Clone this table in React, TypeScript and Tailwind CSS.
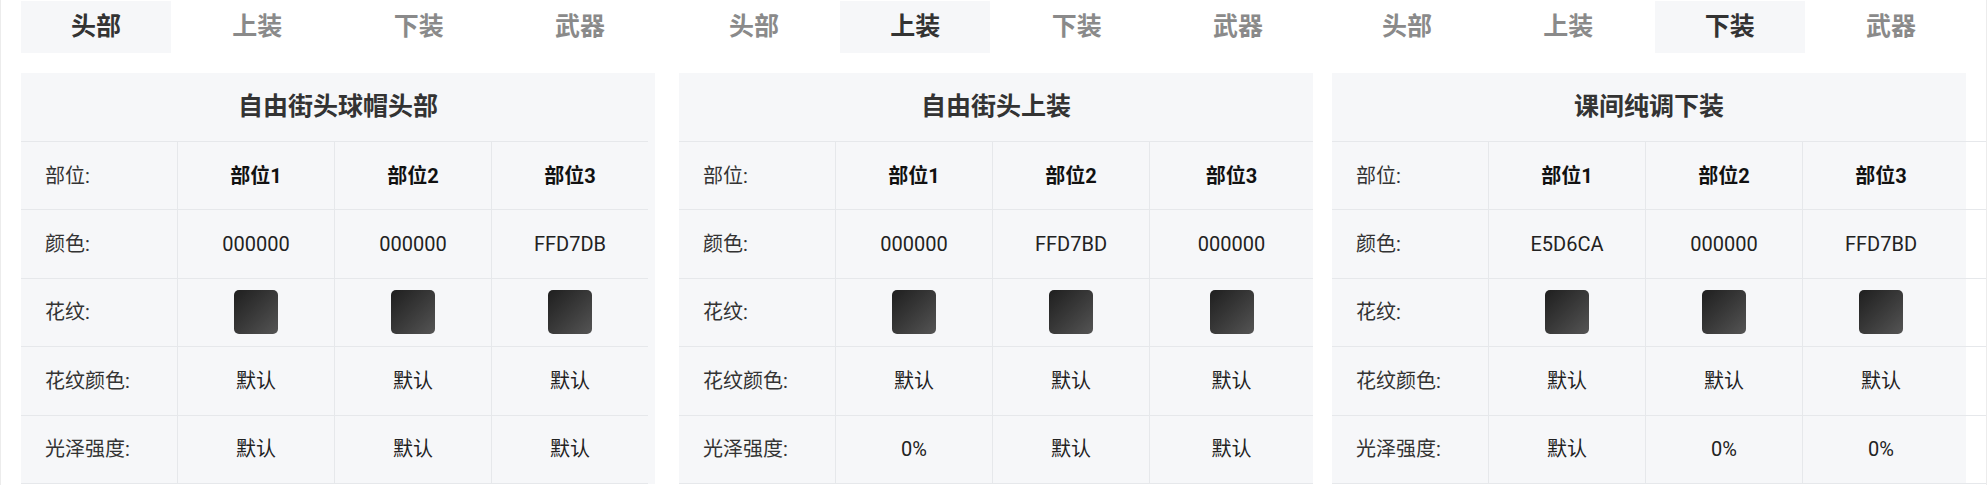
import React from "react";

type Panel = {
  title: string;
  active: number;
  colors: string[];
  patternColors: string[];
  gloss: string[];
  lastCol: string;
  filler: string;
  gap: string;
};

const TABS = ["头部", "上装", "下装", "武器"];

const PANELS: Panel[] = [
  {
    title: "自由街头球帽头部",
    active: 0,
    colors: ["000000", "000000", "FFD7DB"],
    patternColors: ["默认", "默认", "默认"],
    gloss: ["默认", "默认", "默认"],
    lastCol: "w-[157px]",
    filler: "w-0",
    gap: "ml-[21px]",
  },
  {
    title: "自由街头上装",
    active: 1,
    colors: ["000000", "FFD7BD", "000000"],
    patternColors: ["默认", "默认", "默认"],
    gloss: ["0%", "默认", "默认"],
    lastCol: "w-[164px]",
    filler: "w-0",
    gap: "ml-[24px]",
  },
  {
    title: "课间纯调下装",
    active: 2,
    colors: ["E5D6CA", "000000", "FFD7BD"],
    patternColors: ["默认", "默认", "默认"],
    gloss: ["默认", "0%", "0%"],
    lastCol: "w-[157px]",
    filler: "w-[40px]",
    gap: "ml-[19px]",
  },
];

function Swatch() {
  return (
    <div className="w-[44px] h-[44px] rounded-[5px] bg-gradient-to-br from-[#1f1f1f] to-[#555555]" />
  );
}

function Row({
  label,
  cells,
  lastCol,
  filler,
  bold,
}: {
  label: string;
  cells: React.ReactNode[];
  lastCol: string;
  filler: string;
  bold?: boolean;
}) {
  return (
    <div className="flex h-[68.4px] border-b border-[#e6e8eb]">
      <div className="w-[156px] shrink-0 flex items-center pl-[24px] text-[20px] text-[#333333]">
        {label}
      </div>
      {cells.map((c, i) => (
        <div
          key={i}
          className={`${i === 2 ? lastCol : "w-[157px]"} shrink-0 flex items-center justify-center border-l border-[#e6e8eb] text-[20px] ${
            bold ? "font-bold text-[#111111]" : "text-[#222222]"
          }`}
        >
          {c}
        </div>
      ))}
      <div className={`${filler} shrink-0`} />
    </div>
  );
}

function PanelView({ p }: { p: Panel }) {
  return (
    <div className={`w-[634px] shrink-0 ${p.gap}`}>
      <div className="flex justify-between pt-[1px]">
        {TABS.map((t, i) => (
          <div
            key={t}
            className={`w-[150px] h-[52px] flex items-center justify-center text-[25px] font-bold ${
              i === p.active ? "bg-[#f6f7f9] text-[#333333]" : "text-[#8a8a8a]"
            }`}
          >
            {t}
          </div>
        ))}
      </div>
      <div className="mt-[20px] bg-[#f6f7f9]">
        <div className="h-[68px] flex items-center justify-center text-[25px] font-bold text-[#333333]">
          {p.title}
        </div>
        <div className="border-t border-[#e6e8eb] w-max">
          <Row label="部位:" cells={["部位1", "部位2", "部位3"]} lastCol={p.lastCol} filler={p.filler} bold />
          <Row label="颜色:" cells={p.colors} lastCol={p.lastCol} filler={p.filler} />
          <Row
            label="花纹:"
            cells={[<Swatch key="a" />, <Swatch key="b" />, <Swatch key="c" />]}
            lastCol={p.lastCol}
            filler={p.filler}
          />
          <Row label="花纹颜色:" cells={p.patternColors} lastCol={p.lastCol} filler={p.filler} />
          <Row label="光泽强度:" cells={p.gloss} lastCol={p.lastCol} filler={p.filler} />
        </div>
      </div>
    </div>
  );
}

export default function App() {
  return (
    <div className="w-[1987px] h-[485px] overflow-hidden bg-white border-x border-[#ececec] font-['Roboto','Noto_Sans_CJK_SC',sans-serif]">
      <div className="flex -ml-[1px]">
        {PANELS.map((p) => (
          <PanelView key={p.title} p={p} />
        ))}
      </div>
    </div>
  );
}
